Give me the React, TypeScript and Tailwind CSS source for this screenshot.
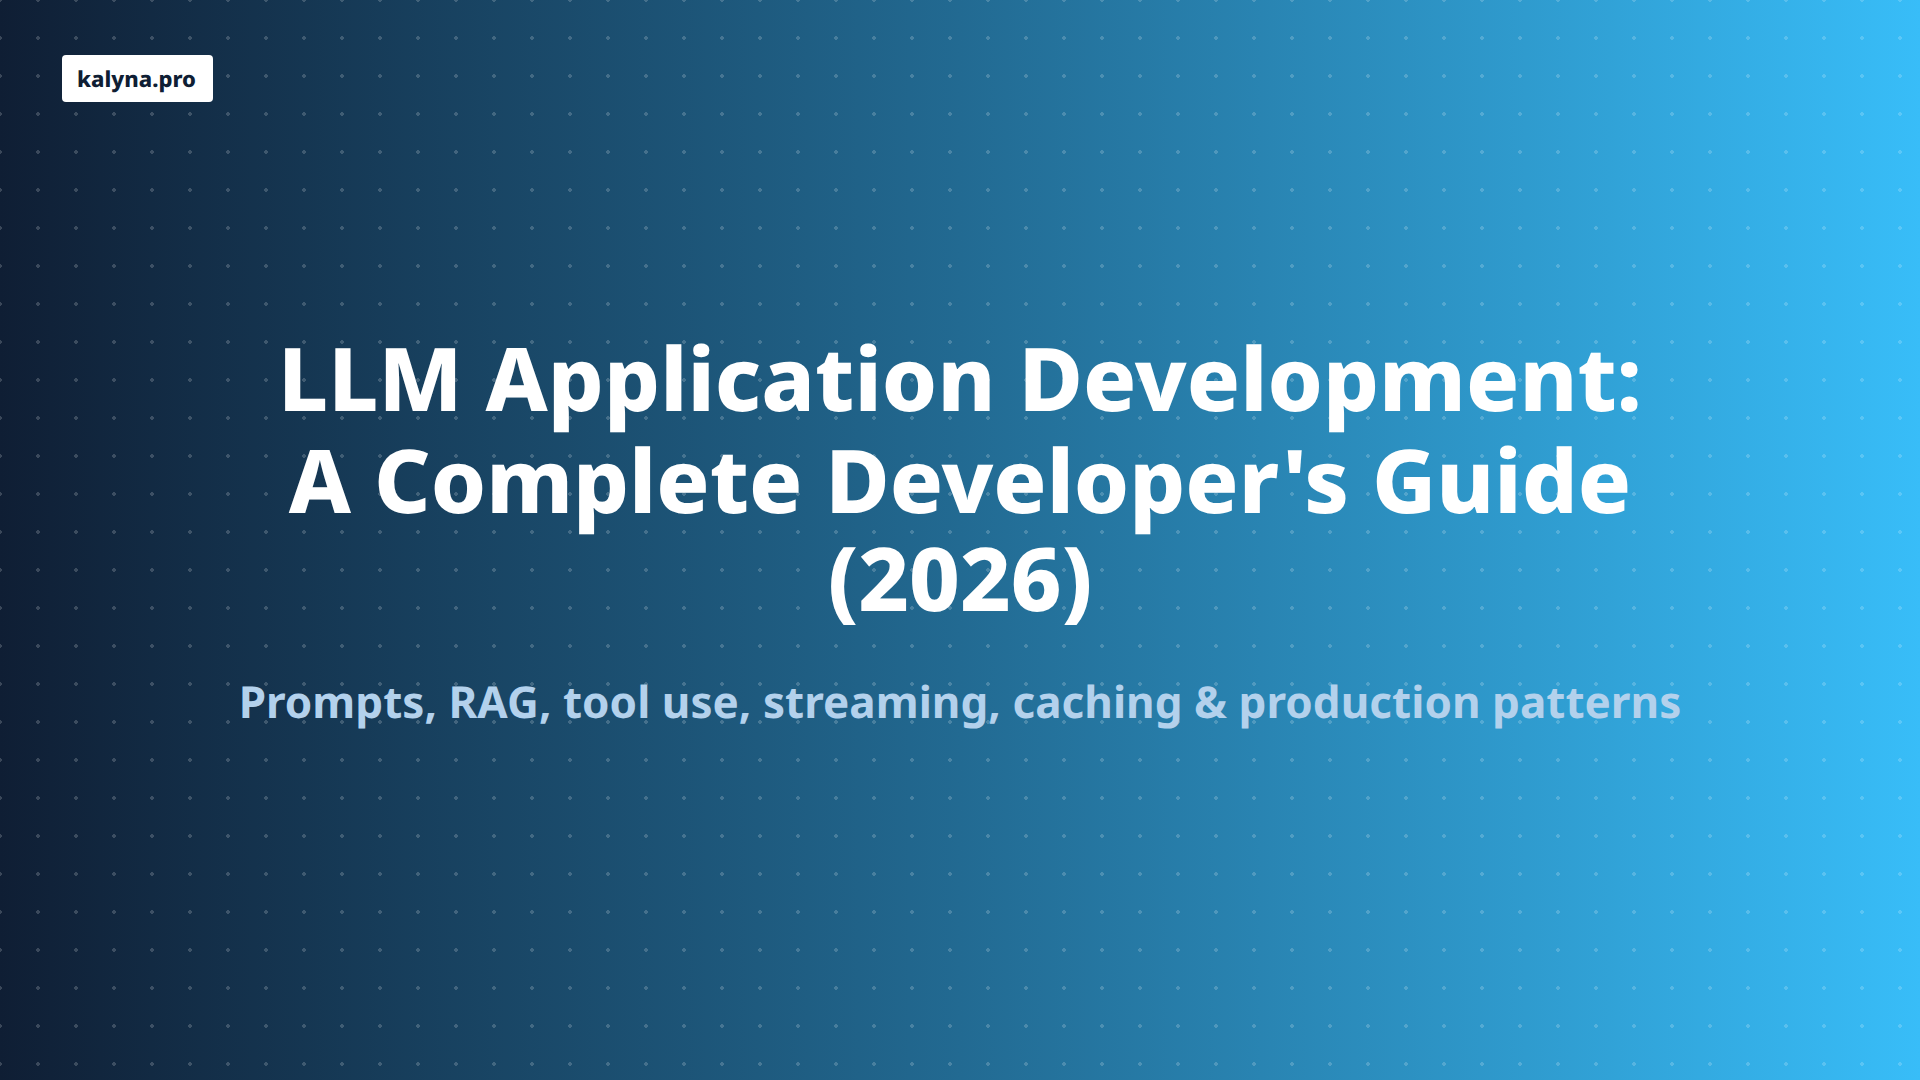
export default function App() {
  return (
    <div className="relative flex h-[1080px] w-[1920px] flex-col items-center justify-center overflow-hidden bg-[linear-gradient(90deg,#0f1e34_0%,#226a92_50%,#38bdf8_100%)] pb-[23px] font-['Noto_Sans',sans-serif] [text-rendering:geometricPrecision]">
      {/* dot grid */}
      <div className="absolute inset-0 bg-[radial-gradient(circle,rgba(255,255,255,0.18)_2px,transparent_2px)] bg-[length:38px_38px] bg-[position:19px_19px]" />

      <div className="absolute left-[62px] top-[55px] rounded-[4px] bg-white pb-[7px] pl-[15px] pr-[17px] pt-[9px] text-[22px] font-extrabold leading-[31px] text-[#0f1e34]">
        kalyna.pro
      </div>

      <div className="relative flex max-w-[1500px] flex-col items-center text-center">
        <h1 className="text-[88px] font-extrabold leading-[100px] text-white">
          <span className="block tracking-[0.08px]">LLM Application Development:</span>
          <span className="mt-[2px] block">A Complete Developer's Guide</span>
          <span className="mt-[-2px] block">(2026)</span>
        </h1>
        <p className="mt-[44px] text-[44px] font-bold leading-[60px] tracking-[0.04px] text-[#b3d1ec]">
          Prompts, RAG, tool use, streaming, caching &amp; production patterns
        </p>
      </div>
    </div>
  );
}
